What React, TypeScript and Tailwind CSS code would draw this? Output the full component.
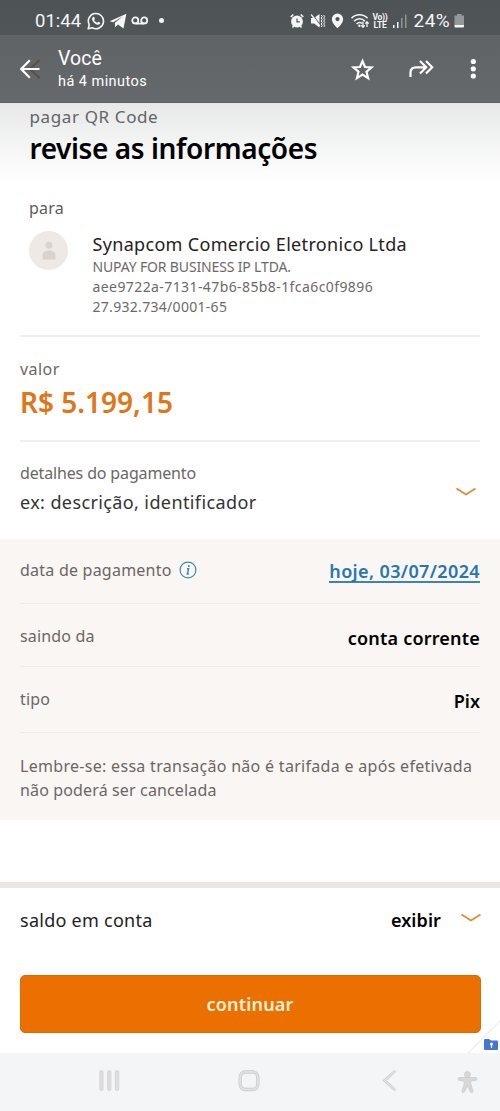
import type { ReactNode } from "react";

function StatusBar() {
  return (
    <div className="flex h-[35px] items-start bg-linear-to-b from-[#4e5356] to-[#505558] pl-[35px] text-[#f4f5f5]">
      <span className="mt-[9px] w-[52px] font-['Roboto'] text-[18.5px] leading-6">01:44</span>
      <svg className="mt-[12px] shrink-0" width="18" height="18" viewBox="0 0 18 18" fill="none" stroke="currentColor">
        <path d="M1.2 16.8 2.3 12.8A7.6 7.6 0 1 1 5.2 15.7Z" strokeWidth="1.6" strokeLinejoin="round" />
        <path d="M6.2 4.9c.5-.2.9-.1 1.1.3l.6 1.5c.1.3-.5.9-.7 1.2.7 1.3 1.6 2.1 3 2.8.4-.3.8-1.1 1.2-1l1.7.8c.3.2 0 1.2-.3 1.5-.9.9-2 .9-3.200.4C7.700 11.600 6 9.900 5.200 7.900c-.4-1.200-.1-2.300 1-3z" fill="currentColor" stroke="none" />
      </svg>
      <svg className="ml-[4px] mt-[13px] shrink-0" width="18" height="17" viewBox="0 0 18 17" fill="currentColor">
        <path d="M.6 8.200 17.400.8 14.500 15.600 9 11.600l-2.800 2.600-.4-4.500 8-6.200-9.600 5.700z" />
      </svg>
      <svg className="ml-[4px] mt-[15px] shrink-0" width="18" height="12" viewBox="0 0 18 12" fill="none" stroke="currentColor" strokeWidth="1.800">
        <circle cx="4.300" cy="5.400" r="3" />
        <circle cx="13.200" cy="5.400" r="3" />
        <path d="M4.300 8.600h9" />
      </svg>
      <span className="ml-[10px] mt-[18px] h-[5px] w-[5px] shrink-0 rounded-full bg-[#f4f5f5]" />
      <svg className="ml-[126px] mt-[13px] shrink-0" width="14" height="16" viewBox="0 0 14 16" fill="none" stroke="currentColor">
        <circle cx="7" cy="8.500" r="5.900" fill="currentColor" stroke="none" />
        <path d="M.8 4 3.300 1.500M13.200 4 10.700 1.500M2.500 14.500l1.500-2M11.500 14.500l-1.500-2" strokeWidth="1.700" />
        <path d="M7 5.500v3.300h2.800" stroke="#505558" strokeWidth="1.200" />
      </svg>
      <svg className="ml-[6px] mt-[13px] shrink-0" width="16" height="16" viewBox="0 0 16 16" fill="currentColor">
        <path d="M1 5h3l5.500-4v13.500L4 10.500H1z" />
        <path d="M2.500 1.500 11 13" stroke="#505558" strokeWidth="1.100" />
        <path d="M1.200 1.500 9.700 13" stroke="currentColor" strokeWidth="1.300" />
        <path d="M11.200 2l1 1.500-1 1.500 1 1.500-1 1.500 1 1.500-1 1.500 1 1.500-1 1.500M13.700 2l1 1.500-1 1.500 1 1.500-1 1.500 1 1.500-1 1.500 1 1.500-1 1.500" fill="none" stroke="currentColor" strokeWidth="1" />
      </svg>
      <svg className="ml-[5px] mt-[13px] shrink-0" width="13" height="16" viewBox="0 0 13 16">
        <path fillRule="evenodd" fill="currentColor" d="M6.500.5A5.600 5.600 0 0 1 12.100 6.200c0 3.500-3.100 6.300-5.600 9.100C4 12.500.9 9.700.9 6.200A5.600 5.600 0 0 1 6.500.5zm0 3.500a2.100 2.100 0 1 0 0 4.200 2.100 2.100 0 0 0 0-4.200z" />
      </svg>
      <svg className="ml-[5.500px] mt-[13px] shrink-0" width="20" height="16" viewBox="0 0 20 16" fill="none" stroke="currentColor" strokeWidth="1.600">
        <path d="M1.500 5.200C6 .6 13 .6 17.500 5.200M4 8.200C7.200 5 12 5 15 8.200M6.500 11C8.500 9.200 10.500 9.200 12 10.500" />
        <circle cx="9.400" cy="12.800" r="1.200" fill="currentColor" stroke="none" />
        <path d="M13 8.500v5.500M11.300 12.300 13 14.300l1.700-2M17 14V9M15.300 10.700 17 8.700l1.700 2" strokeWidth="1.300" />
      </svg>
      <div className="ml-[2px] mt-[13px] w-[17px] shrink-0 text-center font-['Roboto'] text-[8.500px] font-bold leading-[8px] tracking-[-0.300px]">
        <div className="whitespace-nowrap">Vo))</div>
        <div>LTE</div>
      </div>
      <svg className="ml-[4px] mt-[13px] shrink-0" width="14" height="15" viewBox="0 0 14 15" fill="currentColor">
        <path d="M0 12h1.500v3H0zM4 9h1.500v6H4z" />
        <path d="M8 5h1.500v10H8zM12 1.500h1.500V15H12z" opacity=".4" />
      </svg>
      <span className="ml-[7px] mt-[9px] w-[40px] shrink-0 whitespace-nowrap font-['Roboto'] text-[19px] leading-6 tracking-[0.500px]">24%</span>
      <svg className="mt-[13px] shrink-0" width="11" height="16" viewBox="0 0 11 16">
        <path d="M3 1h4.500v1.500H10V12H.5V2.500H3z" fill="#94989a" />
        <path d="M.5 12H10v1.500a1 1 0 0 1-1 1H1.500a1 1 0 0 1-1-1z" fill="#f4f5f5" />
      </svg>
    </div>
  );
}

function ViewerHeader() {
  return (
    <header className="flex h-[68px] border-b border-[#5b6062] bg-linear-to-b from-[#5f6366] to-[#65696c] pl-[19px] font-['Roboto'] text-white">
      <svg className="mt-[23px] shrink-0" width="23" height="22" viewBox="0 0 23 22" fill="none">
        <path d="M20.500 2 11 11l9.500 9" stroke="#5c4d40" strokeWidth="1.800" />
        <path d="M20.500 11H2.500M10.800 2.300 2.200 11l8.600 8.700" stroke="currentColor" strokeWidth="2.200" />
      </svg>
      <div className="ml-[16px] w-[290px] pt-[12px]">
        <div className="text-[19.500px] leading-6 tracking-[0.100px]">Você</div>
        <div className="mt-px text-[14.500px] leading-5 tracking-[0.450px]">há 4 minutos</div>
      </div>
      <svg className="ml-[3px] mt-[23px] shrink-0" width="23" height="23" viewBox="0 0 23 23" fill="none" stroke="currentColor" strokeWidth="2.200">
        <path d="m11.500 3 2.500 6 6.500.5-5 4.200 1.600 6.400-5.600-3.500-5.600 3.500 1.600-6.400-5-4.200L9 9z" />
      </svg>
      <svg className="ml-[34px] mt-[23px] shrink-0" width="27" height="21" viewBox="0 0 27 21" fill="none" stroke="currentColor" strokeWidth="2.200">
        <path d="M2.500 19v-4.500c0-3.500 2.500-5.200 5.500-5.200h9.500M12 3l6.200 6.300L12 15.600M18 3l6.200 6.300L18 15.600" />
      </svg>
      <svg className="ml-[34px] mt-[23px] shrink-0" width="8" height="22" viewBox="0 0 8 22" fill="currentColor">
        <circle cx="4.300" cy="3.500" r="2.600" />
        <circle cx="4.300" cy="10.800" r="2.600" />
        <circle cx="4.300" cy="18" r="2.600" />
      </svg>
    </header>
  );
}

function Chevron() {
  return (
    <svg width="22" height="10" viewBox="0 0 22 10" fill="none" stroke="#e08a32" strokeWidth="1.700">
      <path d="M1.500 1.500 11 7.500l9.500-6" />
    </svg>
  );
}

function Row({ height, label, children }: { height: string; label: ReactNode; children: ReactNode }) {
  return (
    <div className={`flex items-start justify-between border-b border-[#eeebe8] ${height}`}>
      <div className="text-[16px] leading-5 tracking-[0.150px] text-[#6b6764]">{label}</div>
      {children}
    </div>
  );
}

export default function App() {
  return (
    <div className="flex h-[1111px] w-[500px] flex-col overflow-hidden whitespace-nowrap bg-white font-['Noto_Sans',sans-serif]">
      <StatusBar />
      <ViewerHeader />
      <main className="h-[436px] bg-white">
        <div className="h-[80px] bg-linear-to-b from-[#e7e9e8] to-white pl-[29.500px] pt-[2px]">
          <div className="text-[17px] leading-6 tracking-[0.620px] text-[#626466]">pagar QR Code</div>
          <h1 className="mt-[3px] text-[28px] font-semibold leading-8 tracking-[-0.400px] text-black">revise as informações</h1>
        </div>
        <div className="px-5">
          <section className="h-[154px] border-b-2 border-[#f0f0f0] pl-[9px] pt-[15px]">
            <div className="text-[16px] leading-5 tracking-[0.200px] text-[#5e5b59]">para</div>
            <div className="mt-[13px] flex">
              <div className="flex h-[39px] w-[39px] items-center justify-center rounded-full bg-[#eee9e5]">
                <svg width="14" height="20" viewBox="0 0 14 20" fill="#d8d3cf">
                  <circle cx="7" cy="4.200" r="3.500" />
                  <path d="M.5 18.500v-4.500c0-3 2.500-4.500 6.500-4.500s6.500 1.500 6.500 4.500v4.500z" />
                </svg>
              </div>
              <div className="ml-[24.500px] pt-px">
                <div className="text-[18px] leading-6 tracking-[0.320px] text-[#222]">Synapcom Comercio Eletronico Ltda</div>
                <div className="mt-[1px] text-[14px] leading-5 text-[#6d6967]">
                  <div className="tracking-[-0.150px]">NUPAY FOR BUSINESS IP LTDA.</div>
                  <div className="tracking-[0.410px]">aee9722a-7131-47b6-85b8-1fca6c0f9896</div>
                  <div className="tracking-[0.300px]">27.932.734/0001-65</div>
                </div>
              </div>
            </div>
          </section>
          <section className="h-[105px] border-b-2 border-[#f0f0f0] pt-[22px]">
            <div className="text-[16px] leading-5 tracking-[0.450px] text-[#6b6764]">valor</div>
            <div className="mt-[5px] text-[28px] font-semibold leading-9 text-[#df7618]">R$ 5.199,15</div>
          </section>
          <section className="flex justify-between pt-[21px]">
            <div>
              <div className="text-[16px] leading-5 tracking-[-0.150px] text-[#6b6764]">detalhes do pagamento</div>
              <div className="mt-[7px] text-[18px] leading-6 tracking-[0.390px] text-[#333]">ex: descrição, identificador</div>
            </div>
            <div className="mr-[3px] mt-[24px]"><Chevron /></div>
          </section>
        </div>
      </main>
      <section className="h-[281px] bg-[#faf6f4] px-5">
        <Row
          height="h-[65px] pt-[21px]"
          label={
            <span className="flex items-center gap-[7px] tracking-[0.230px]">
              data de pagamento
              <svg width="18" height="18" viewBox="0 0 18 18" fill="none" stroke="#3c8abd">
                <circle cx="9" cy="9" r="7.900" strokeWidth="1.200" />
                <path d="M8 7.700h1.600l-1.200 5.200h1.500" strokeWidth="1.500" />
                <circle cx="9.900" cy="5.100" r="1" fill="#3c8abd" stroke="none" />
              </svg>
            </span>
          }
        >
          <a className="-mt-px h-6 border-b-2 border-[#3883b8] text-[18px] font-semibold leading-6 tracking-[0.380px] text-[#2876ad]">hoje, 03/07/2024</a>
        </Row>
        <Row height="h-[63px] pt-[22px]" label="saindo da">
          <div className="text-[18px] font-semibold leading-6 tracking-[0.200px] text-black">conta corrente</div>
        </Row>
        <Row height="h-[66px] pt-[22px]" label="tipo">
          <div className="text-[18px] font-semibold leading-6 text-black">Pix</div>
        </Row>
        <p className="pt-[21px] text-[16px] leading-6 tracking-[0.300px] text-[#6b6764]">
          Lembre-se: essa transação não é tarifada e após efetivada
          <br />
          <span className="tracking-[0.140px]">não poderá ser cancelada</span>
        </p>
      </section>
      <div className="h-[62px] shrink-0" />
      <footer className="relative h-[171px] border-t-[6px] border-[#ebe6e2] px-5">
        <div className="flex h-[87px] pt-[20px] text-[18px] leading-6">
          <span className="flex-1 tracking-[0.260px] text-[#222]">saldo em conta</span>
          <span className="font-semibold tracking-[0.100px] text-black">exibir</span>
          <span className="-mr-[2px] ml-[19px] mt-[5px]"><Chevron /></span>
        </div>
        <button className="-mx-[0.500px] flex h-[58px] w-[461px] items-center justify-center rounded-[5px] border border-[#d96b08] bg-[#ec7000] pt-px text-[18px] font-semibold tracking-[0.200px] text-[#fff0dc]">
          continuar
        </button>
        <svg className="absolute bottom-0 right-0" width="32" height="32" viewBox="0 0 32 32">
          <path d="M0 32 32 0" stroke="#ececee" strokeWidth="1.200" />
          <path d="M16 19a1 1 0 0 1 1-1h4l2 1.500h6a1 1 0 0 1 1 1V28a1 1 0 0 1-1 1H17a1 1 0 0 1-1-1z" fill="#4477d5" />
          <circle cx="23.500" cy="23" r="1.500" fill="white" />
          <path d="M23.500 23v4" stroke="white" strokeWidth="1.200" />
        </svg>
      </footer>
      <nav className="flex h-[58px] items-start bg-[#f4f5f7] pl-[99px] pt-[17px]">
        <svg width="21" height="22" viewBox="0 0 21 22" fill="#dedede" stroke="#cecece" strokeWidth=".7">
          <rect x=".8" y=".6" width="3.300" height="20" rx="1.600" />
          <rect x="8.600" y=".6" width="3.300" height="20" rx="1.600" />
          <rect x="16.400" y=".6" width="3.300" height="20" rx="1.600" />
        </svg>
        <svg className="ml-[118px]" width="22" height="22" viewBox="0 0 22 22" fill="none">
          <rect x="2.300" y="2" width="17.500" height="17.500" rx="5" stroke="#cacaca" strokeWidth="3.400" />
          <rect x="2.300" y="2" width="17.500" height="17.500" rx="5" stroke="#e0e0e0" strokeWidth="2.200" />
        </svg>
        <svg className="ml-[122px]" width="15" height="22" viewBox="0 0 15 22" fill="none">
          <path d="M12.300 1.800 2.600 10.500l9.700 8.700" stroke="#cacaca" strokeWidth="2.800" strokeLinecap="round" />
          <path d="M12.300 1.800 2.600 10.500l9.700 8.700" stroke="#e0e0e0" strokeWidth="1.600" strokeLinecap="round" />
        </svg>
        <svg className="ml-[60px] mt-[1px]" width="21" height="23" viewBox="0 0 21 23" fill="#d8d8d8" stroke="#c6c6c6" strokeWidth=".6">
          <path d="M2.200 6.500h16.600c1.500 0 1.500 2.700 0 2.900l-5.100.9v2.200l2.300 7.200c.6 1.900-2 2.700-2.700 1l-2.800-5.900-2.800 5.900c-.8 1.700-3.300.9-2.700-1l2.300-7.200v-2.200l-5.100-.9c-1.500-.2-1.500-2.900 0-2.900z" />
          <circle cx="10.500" cy="3.500" r="3" />
        </svg>
      </nav>
    </div>
  );
}
